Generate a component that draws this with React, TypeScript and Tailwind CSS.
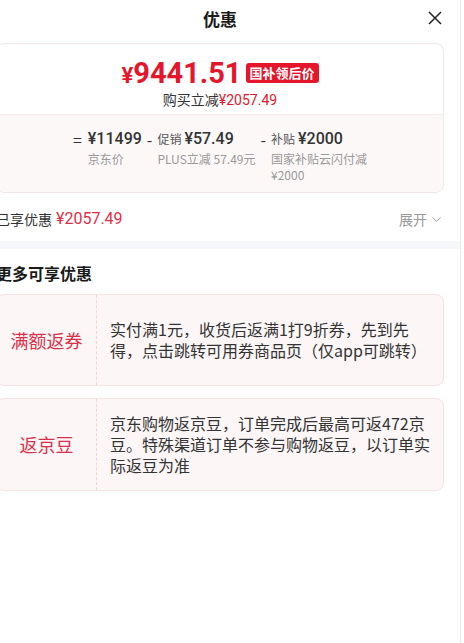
import { ChevronDown } from "lucide-react";

const num = "font-['Roboto','Noto_Sans_CJK_SC',sans-serif]";

function Breakdown() {
  return (
    <div className="bg-[#fdf8f8] border-t border-[#f6ecec] pt-[12px] pb-[9px] flex justify-center gap-[5px]">
      <div className="flex items-start gap-[6px]">
        <span className="text-[16px] leading-[24px] text-[#333]">=</span>
        <div className="flex flex-col">
          <span className={`${num} text-[16px] leading-[24px] font-medium text-[#333]`}>¥11499</span>
          <span className="text-[12px] leading-[16px] text-[#999]">京东价</span>
        </div>
      </div>
      <div className="flex items-start gap-[5px]">
        <span className="text-[16px] leading-[24px] text-[#333]">-</span>
        <div className="flex flex-col">
          <div className="flex items-baseline h-[24px]">
            <span className="text-[12px] text-[#555] mr-[3px]">促销</span>
            <span className={`${num} text-[16px] leading-[24px] font-medium text-[#333]`}>¥57.49</span>
          </div>
          <span className="text-[12px] leading-[16px] text-[#999]">PLUS立减 57.49元</span>
        </div>
      </div>
      <div className="flex items-start gap-[5px]">
        <span className="text-[16px] leading-[24px] text-[#333]">-</span>
        <div className="flex flex-col w-[96px]">
          <div className="flex items-baseline h-[24px]">
            <span className="text-[12px] text-[#555] mr-[3px]">补贴</span>
            <span className={`${num} text-[16px] leading-[24px] font-medium text-[#333]`}>¥2000</span>
          </div>
          <span className="text-[12px] leading-[16px] text-[#999]">
            国家补贴云闪付减
            <br />
            ¥2000
          </span>
        </div>
      </div>
    </div>
  );
}

function CouponCard({ label, text }: { label: string; text: string }) {
  return (
    <div className="flex min-h-[92px] border border-[#f3e3e5] bg-[#fdf6f7] rounded-[8px]">
      <div className="w-[100px] shrink-0 flex items-center justify-center border-r border-dashed border-[#ebd5d8] text-[18px] text-[#d9304a]">
        {label}
      </div>
      <div className="flex-1 flex items-center pl-[13px] pr-[10px] py-[14px] text-[16px] leading-[21px] text-[#333]">
        {text}
      </div>
    </div>
  );
}

export default function App() {
  return (
    <div className="w-[464px] h-[643px] bg-white flex overflow-hidden font-['Noto_Sans_CJK_SC',sans-serif]">
      <div className="w-[480px] -ml-[20px] shrink-0 relative">
        {/* header */}
        <div className="h-[43px] pt-[7px] text-center">
          <span className="text-[17px] leading-[22px] font-bold text-[#1a1a1a]">优惠</span>
        </div>
        <button className="absolute right-[18px] top-[11px]">
          <svg width="14" height="14" viewBox="0 0 14 14" fill="none" stroke="#222" strokeWidth="1.5">
            <path d="M1 1 L13 13 M13 1 L1 13" />
          </svg>
        </button>

        {/* price card */}
        <div className="mx-4 border border-[#f0e7e8] rounded-[8px] overflow-hidden">
          <div className="pt-[13px] pb-[5px] flex flex-col items-center">
            <div className="flex items-center h-[32px]">
              <span className={`${num} text-[22px] font-bold text-[#e5162b] mt-[4px]`}>¥</span>
              <span className={`${num} text-[29px] leading-none font-bold text-[#e5162b]`}>9441.51</span>
              <span className="ml-[4px] bg-[#e5162b] text-white text-[13px] font-bold px-[4px] h-[20px] leading-[20px] rounded-[3px]">
                国补领后价
              </span>
            </div>
            <div className="h-[20px] text-[14px] leading-[20px] text-[#333]">
              购买立减<span className={`${num} text-[#e5162b]`}>¥2057.49</span>
            </div>
          </div>
          <Breakdown />
        </div>

        {/* saved */}
        <div className="mt-[4px] px-4 h-[44px] flex items-center justify-between">
          <div className="flex items-center gap-[4px]">
            <span className="text-[14px] text-[#333]">已享优惠</span>
            <span className={`${num} text-[16px] text-[#e22e45]`}>¥2057.49</span>
          </div>
          <div className="flex items-center gap-[2px] text-[14px] text-[#999]">
            展开
            <ChevronDown size={15} strokeWidth={1.5} />
          </div>
        </div>

        <div className="h-[8px] bg-[#f6f7fa]" />

        {/* more */}
        <div className="px-4 pt-[13px]">
          <div className="text-[16px] leading-[22px] font-bold text-[#1a1a1a]">更多可享优惠</div>
          <div className="mt-[10px] flex flex-col gap-[12px]">
            <CouponCard
              label="满额返券"
              text="实付满1元，收货后返满1打9折券，先到先得，点击跳转可用券商品页（仅app可跳转）"
            />
            <CouponCard
              label="返京豆"
              text="京东购物返京豆，订单完成后最高可返472京豆。特殊渠道订单不参与购物返豆，以订单实际返豆为准"
            />
          </div>
        </div>
      </div>
      <div className="w-px bg-[#e8e8e8] shrink-0" />
    </div>
  );
}
